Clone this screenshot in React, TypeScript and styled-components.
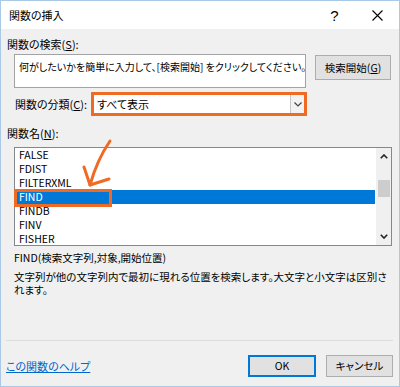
import styled, { createGlobalStyle } from "styled-components";

const ORANGE = "#f06a23";

const GlobalStyle = createGlobalStyle`
  html, body {
    margin: 0;
    padding: 0;
    background: #ffffff;
  }
  body {
    font-family: "Noto Sans CJK JP", "Noto Sans", sans-serif;
    font-feature-settings: "palt";
    color: #000;
  }
`;

const functions = ["FALSE", "FDIST", "FILTERXML", "FIND", "FINDB", "FINV", "FISHER"];

export default function App() {
  return (
    <>
      <GlobalStyle />
      <Window>
        <TitleBar>
          <Title>関数の挿入</Title>
          <TitleButtons>
            <TitleButton>?</TitleButton>
            <TitleButton>
              <svg width="11" height="11" viewBox="0 0 11 11">
                <path d="M0.5 0.5 L10.5 10.5 M10.5 0.5 L0.5 10.5" stroke="#000" strokeWidth="1.1" />
              </svg>
            </TitleButton>
          </TitleButtons>
        </TitleBar>

        <Body>
          <Label $top={8}>
            関数の検索(<Key>S</Key>):
          </Label>
          <SearchRow>
            <SearchInput>何がしたいかを簡単に入力して、[検索開始] をクリックしてください。</SearchInput>
            <DialogButton $width={76} $height={25} $left={9}>
              検索開始(<Key>G</Key>)
            </DialogButton>
          </SearchRow>

          <CategoryRow>
            <CategoryLabel>
              関数の分類(<Key>C</Key>):
            </CategoryLabel>
            <Select>
              <SelectValue>すべて表示</SelectValue>
              <SelectArrow>
                <svg width="8" height="5" viewBox="0 0 8 5">
                  <path d="M0.5 0.5 L4 4 L7.5 0.5" fill="none" stroke="#444" strokeWidth="1.2" />
                </svg>
              </SelectArrow>
            </Select>
          </CategoryRow>

          <Label $top={10}>
            関数名(<Key>N</Key>):
          </Label>
          <ListBox>
            <Items>
              {functions.map((name) => (
                <Item key={name} $selected={name === "FIND"}>
                  {name}
                </Item>
              ))}
            </Items>
            <ScrollBar>
              <ScrollArrow>
                <svg width="8" height="5" viewBox="0 0 8 5">
                  <path d="M0.8 4.3 L4 1 L7.2 4.3" fill="none" stroke="#222" strokeWidth="1.6" />
                </svg>
              </ScrollArrow>
              <Thumb />
              <ScrollArrow $bottom>
                <svg width="8" height="5" viewBox="0 0 8 5">
                  <path d="M0.8 0.7 L4 4 L7.2 0.7" fill="none" stroke="#222" strokeWidth="1.6" />
                </svg>
              </ScrollArrow>
            </ScrollBar>
            <Highlight />
          </ListBox>

          <Syntax>FIND(検索文字列,対象,開始位置)</Syntax>
          <Description>
            文字列が他の文字列内で最初に現れる位置を検索します。大文字と小文字は区別されます。
          </Description>

          <Separator />

          <Footer>
            <HelpLink href="#">この関数のヘルプ</HelpLink>
            <DialogButton $width={68} $height={22} $left={0} $primary>
              OK
            </DialogButton>
            <DialogButton $width={67} $height={22} $left={10}>
              キャンセル
            </DialogButton>
          </Footer>
        </Body>

        <Pointer width="400" height="387" viewBox="0 0 400 387">
          <path d="M110 141 Q 97 160 90 185" fill="none" stroke={ORANGE} strokeWidth="3" strokeLinecap="round" />
          <path d="M84 167 L90 185 L109 179" fill="none" stroke={ORANGE} strokeWidth="3" strokeLinecap="round" strokeLinejoin="round" />
        </Pointer>
      </Window>
    </>
  );
}

const Window = styled.div`
  position: relative;
  width: 400px;
  height: 387px;
  box-sizing: border-box;
  border: 1px solid #a9c9e6;
  background: #f0f0f0;
  display: flex;
  flex-direction: column;
  overflow: hidden;
`;

const TitleBar = styled.div`
  height: 28px;
  background: #ffffff;
  display: flex;
  align-items: center;
  padding-left: 8px;
`;

const Title = styled.div`
  font-size: 11px;
  line-height: 14px;
`;

const TitleButtons = styled.div`
  margin-left: auto;
  display: flex;
  height: 100%;
`;

const TitleButton = styled.div`
  width: 43px;
  height: 100%;
  display: flex;
  align-items: center;
  justify-content: center;
  font-family: "Liberation Sans", sans-serif;
  font-size: 15px;
`;

const Body = styled.div`
  flex: 1;
  display: flex;
  flex-direction: column;
  padding: 0 6px;
`;

const Label = styled.div<{ $top: number }>`
  margin-top: ${(p) => p.$top}px;
  font-size: 11px;
  line-height: 14px;
`;

const Key = styled.span`
  text-decoration: underline;
`;

const SearchRow = styled.div`
  margin-top: 3px;
  padding-left: 7px;
  display: flex;
  align-items: flex-start;
`;

const SearchInput = styled.div`
  width: 292px;
  height: 34px;
  box-sizing: border-box;
  border: 1px solid #a3a3a3;
  background: #ffffff;
  padding: 5px 4px;
  font-size: 10px;
  line-height: 14px;
  white-space: nowrap;
  overflow: hidden;
`;

const DialogButton = styled.div<{ $width: number; $height: number; $left: number; $primary?: boolean }>`
  width: ${(p) => p.$width}px;
  height: ${(p) => p.$height}px;
  margin-left: ${(p) => (p.$primary ? "auto" : `${p.$left}px`)};
  margin-top: 1px;
  box-sizing: border-box;
  border: ${(p) => (p.$primary ? "2px solid #0078d7" : "1px solid #adadad")};
  background: #e1e1e1;
  display: flex;
  align-items: center;
  justify-content: center;
  font-size: 10.5px;
  line-height: 14px;
  white-space: nowrap;
  flex-shrink: 0;
`;

const CategoryRow = styled.div`
  margin-top: 4px;
  padding-left: 8px;
  display: flex;
  align-items: center;
`;

const CategoryLabel = styled.div`
  width: 76px;
  flex-shrink: 0;
  font-size: 11px;
  line-height: 14px;
`;

const Select = styled.div`
  width: 216px;
  height: 24px;
  box-sizing: border-box;
  border: 3px solid ${ORANGE};
  background: #ffffff;
  display: flex;
`;

const SelectValue = styled.div`
  flex: 1;
  padding-left: 3px;
  font-size: 11px;
  line-height: 18px;
`;

const SelectArrow = styled.div`
  width: 13px;
  border-left: 1px solid #c8c8c8;
  background: #f2f2f2;
  display: flex;
  align-items: center;
  justify-content: center;
`;

const ListBox = styled.div`
  position: relative;
  margin-top: 7px;
  margin-left: 7px;
  width: 378px;
  height: 99px;
  box-sizing: border-box;
  border: 1px solid #828790;
  background: #ffffff;
  display: flex;
`;

const Items = styled.div`
  flex: 1;
  display: flex;
  flex-direction: column;
`;

const Item = styled.div<{ $selected?: boolean }>`
  height: 14px;
  line-height: 14px;
  padding-left: 3px;
  margin: 0 1px;
  font-size: 10.5px;
  background: ${(p) => (p.$selected ? "#0078d7" : "transparent")};
  color: ${(p) => (p.$selected ? "#ffffff" : "#000000")};
`;

const ScrollBar = styled.div`
  width: 15px;
  background: #f0f0f0;
  display: flex;
  flex-direction: column;
  align-items: center;
`;

const ScrollArrow = styled.div<{ $bottom?: boolean }>`
  height: 17px;
  width: 100%;
  margin-top: ${(p) => (p.$bottom ? "auto" : "0")};
  display: flex;
  align-items: center;
  justify-content: center;
`;

const Thumb = styled.div`
  margin-top: 15px;
  width: 12px;
  height: 17px;
  background: #cdcdcd;
`;

const Highlight = styled.div`
  position: absolute;
  left: -1px;
  top: 41px;
  width: 98px;
  height: 18px;
  box-sizing: border-box;
  border: 3px solid ${ORANGE};
  pointer-events: none;
`;

const Syntax = styled.div`
  margin-top: 5px;
  margin-left: 7px;
  font-size: 10.5px;
  line-height: 14px;
`;

const Description = styled.div`
  margin-top: 5px;
  margin-left: 7px;
  width: 378px;
  font-size: 10.5px;
  line-height: 13px;
`;

const Separator = styled.div`
  margin-top: 44px;
  margin-left: -1px;
  height: 1px;
  background: #dcdcdc;
`;

const Footer = styled.div`
  margin-top: 13px;
  display: flex;
  align-items: center;
`;

const HelpLink = styled.a`
  margin-left: -1px;
  font-size: 11px;
  line-height: 14px;
  color: #0066cc;
  text-decoration: underline;
`;

const Pointer = styled.svg`
  position: absolute;
  left: -1px;
  top: -1px;
  pointer-events: none;
`;
